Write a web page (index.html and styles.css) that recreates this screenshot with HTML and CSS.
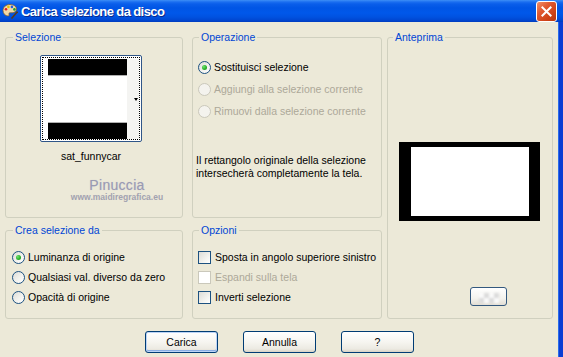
FILE: index.html
```html
<!DOCTYPE html>
<html lang="it">
<head>
<meta charset="utf-8">
<title>Carica selezione da disco</title>
<link rel="stylesheet" href="styles.css">
</head>
<body>
<div class="window">
  <div class="titlebar">
    <svg class="app-icon" viewBox="0 0 16 16" aria-hidden="true">
      <path d="M8 1.5C4 1.5 1 4 1 7.5c0 3 2.3 5.5 5 5.5 1.2 0 1.3-.9 1-1.6-.4-.9.2-1.6 1.2-1.6h2c2.3 0 4.3-1.6 4.3-3.8C14.5 3.3 11.6 1.5 8 1.5z" fill="#F2D9A6" stroke="#7A5A30" stroke-width=".8"/>
      <circle cx="4" cy="6.2" r="1.3" fill="#E02020"/>
      <circle cx="6.4" cy="3.9" r="1.3" fill="#F0C000"/>
      <circle cx="9.9" cy="3.9" r="1.3" fill="#2060E0"/>
      <circle cx="12.4" cy="6.4" r="1.3" fill="#20A030"/>
      <path d="M9.5 15.5 L15.5 8.5" stroke="#5A3A1A" stroke-width="1.6"/>
    </svg>
    <span class="title">Carica selezione da disco</span>
    <button class="close" aria-label="Chiudi">
      <svg viewBox="0 0 21 21" aria-hidden="true"><path d="M6 6 L15 15 M15 6 L6 15" stroke="#fff" stroke-width="2.2" stroke-linecap="square"/></svg>
    </button>
  </div>

  <div class="client">
    <div class="groups">
      <fieldset class="group g-sel">
        <legend>Selezione</legend>
        <div class="sel-body">
          <div class="thumb-col">
            <div class="thumb">
              <div class="thumb-focus">
                <div class="thumb-img"><div class="bar"></div><div class="bar"></div></div>
                <div class="thumb-strip"><span class="arrow"></span></div>
              </div>
            </div>
            <div class="thumb-name">sat_funnycar</div>
          </div>
          <div class="watermark">
            <div class="wm-name">Pinuccia</div>
            <div class="wm-url">www.maidiregrafica.eu</div>
          </div>
        </div>
      </fieldset>

      <fieldset class="group g-op">
        <legend>Operazione</legend>
        <div class="op-body">
          <div class="opt"><span class="radio checked"></span>Sostituisci selezione</div>
          <div class="opt disabled"><span class="radio"></span>Aggiungi alla selezione corrente</div>
          <div class="opt disabled"><span class="radio"></span>Rimuovi dalla selezione corrente</div>
        </div>
        <p class="note">Il rettangolo originale della selezione<br>intersecherà completamente la tela.</p>
      </fieldset>

      <fieldset class="group g-prev">
        <legend>Anteprima</legend>
        <div class="prev-body">
          <div class="preview"><div class="preview-inner"></div></div>
          <button class="mini-btn" aria-label="Trasparenza"><span class="checker"></span></button>
        </div>
      </fieldset>

      <fieldset class="group g-crea">
        <legend>Crea selezione da</legend>
        <div class="list-body">
          <div class="opt"><span class="radio checked"></span>Luminanza di origine</div>
          <div class="opt"><span class="radio"></span>Qualsiasi val. diverso da zero</div>
          <div class="opt"><span class="radio"></span>Opacità di origine</div>
        </div>
      </fieldset>

      <fieldset class="group g-opz">
        <legend>Opzioni</legend>
        <div class="list-body">
          <div class="opt"><span class="check"></span>Sposta in angolo superiore sinistro</div>
          <div class="opt disabled"><span class="check"></span>Espandi sulla tela</div>
          <div class="opt"><span class="check"></span>Inverti selezione</div>
        </div>
      </fieldset>
    </div>

    <div class="actions">
      <button class="btn default">Carica</button>
      <button class="btn">Annulla</button>
      <button class="btn">?</button>
    </div>
  </div>
</div>
</body>
</html>
```

FILE: styles.css
```css
* { box-sizing: border-box; }

html, body {
  margin: 0;
  padding: 0;
}

body {
  width: 563px;
  height: 357px;
  overflow: hidden;
  background: #ECE9D8;
  font-family: "Liberation Sans", Arial, sans-serif;
  font-size: 10.5px;
  color: #000;
}

.window {
  width: 563px;
  height: 357px;
  display: flex;
  flex-direction: column;
}

/* ---------- title bar ---------- */
.titlebar {
  height: 22px;
  flex: none;
  display: flex;
  align-items: center;
  padding: 0 6px 0 2px;
  background: linear-gradient(to bottom,
    #3D8FF6 0px, #1A6EF0 2px, #0A5EEA 4px, #0055E5 8px,
    #0058EA 13px, #0052E0 17px, #0047D2 20px, #003CBF 22px);
}

.app-icon {
  width: 16px;
  height: 16px;
  flex: none;
}

.title {
  flex: 1;
  margin-left: 3px;
  color: #fff;
  font-weight: bold;
  font-size: 13px;
  letter-spacing: -0.6px;
  text-shadow: 1px 1px 0 #0A2A8C;
  white-space: nowrap;
}

.close {
  width: 21px;
  height: 21px;
  padding: 0;
  margin-top: 1px;
  border: 1px solid #fff;
  border-radius: 3px;
  background: linear-gradient(135deg, #F0906A 0%, #E05A32 35%, #D04418 70%, #B8360E 100%);
  display: flex;
  align-items: center;
  justify-content: center;
}

.close svg {
  width: 19px;
  height: 19px;
}

/* ---------- client area ---------- */
.client {
  flex: 1;
  display: flex;
  flex-direction: column;
  padding: 9px 0 0 5px;
  border-right: 4px solid #0A3DD3;
  box-shadow: inset -1px 0 0 #2A6CEB;
}

.groups {
  display: grid;
  grid-template-columns: 178px 9px 190px 5px 166px;
  grid-template-rows: 187px 95px;
  row-gap: 6px;
  grid-template-areas:
    "sel . op . prev"
    "crea . opz . prev";
}

.g-sel { grid-area: sel; }
.g-op { grid-area: op; }
.g-prev { grid-area: prev; }
.g-crea { grid-area: crea; }
.g-opz { grid-area: opz; }

.group {
  margin: 0;
  padding: 0;
  min-width: 0;
  border: 1px solid #D0D0BF;
  border-radius: 3px;
}

.group legend {
  padding: 0 2px;
  margin-left: 7px;
  color: #0046D5;
  line-height: 13px;
}

.g-op legend, .g-opz legend { margin-left: 6px; }
.g-prev legend { margin-left: 5px; }

/* ---------- Selezione ---------- */
.sel-body {
  padding: 11px 0 0 34px;
}

.thumb-col {
  width: 102px;
  display: flex;
  flex-direction: column;
  align-items: center;
}

.thumb {
  width: 102px;
  height: 87px;
  padding: 1px;
  border: 1px solid #2F5587;
  border-radius: 2px;
  background: #fff;
}

.thumb-focus {
  height: 100%;
  border: 1px dotted #000;
  background: #fff;
  display: flex;
  padding: 1px 0 0 5px;
}

.thumb-img {
  width: 79px;
  display: flex;
  flex-direction: column;
  justify-content: space-between;
}

.bar {
  height: 16px;
  background: #000;
}

.bar:first-child { box-shadow: 0 1px 0 #B0B0B0; }
.bar:last-child { box-shadow: 0 -1px 0 #B0B0B0; }

.thumb-strip {
  flex: 1;
  background: #F4F4F2;
  display: flex;
  align-items: center;
  justify-content: flex-end;
  padding-right: 1px;
}

.arrow {
  width: 0;
  height: 0;
  border-left: 2.5px solid transparent;
  border-right: 2.5px solid transparent;
  border-top: 3px solid #000;
}

.thumb-name {
  margin-top: 8px;
  line-height: 13px;
  text-align: center;
}

.watermark {
  width: 120px;
  margin: 14px 0 0 17px;
  text-align: center;
  font-weight: bold;
}

.wm-name {
  font-size: 14px;
  line-height: 16px;
  color: #9A9AB2;
  font-weight: normal;
  letter-spacing: 0.3px;
  text-shadow: 0 0 1px #C4C4D4;
}

.wm-url {
  font-size: 8.5px;
  line-height: 9px;
  color: #A2A2B0;
}

/* ---------- options ---------- */
.opt {
  display: flex;
  align-items: center;
  height: 14px;
  white-space: nowrap;
}

.opt.disabled { color: #ACA899; }

.radio {
  width: 13px;
  height: 13px;
  flex: none;
  margin-right: 3px;
  border: 1px solid #1C5180;
  border-radius: 50%;
  background: linear-gradient(135deg, #DCDCD7 0%, #F2F2EE 55%, #FFFFFF 100%);
  display: flex;
  align-items: center;
  justify-content: center;
}

.radio.checked::after {
  content: "";
  width: 5px;
  height: 5px;
  border-radius: 50%;
  background: radial-gradient(circle at 35% 35%, #6FE36F 0%, #2BB22B 55%, #1A8E1A 100%);
}

.opt.disabled .radio {
  border-color: #CAC8BB;
  background: #F4F3EE;
}

.check {
  width: 13px;
  height: 13px;
  flex: none;
  margin-right: 4px;
  border: 1px solid #1C5180;
  background: linear-gradient(135deg, #DCDCD7 0%, #F0F0EC 55%, #FFFFFF 100%);
}

.opt.disabled .check {
  border-color: #CAC8BB;
  background: #fff;
}

/* ---------- Operazione ---------- */
.op-body {
  padding: 16px 0 0 5px;
  display: flex;
  flex-direction: column;
  gap: 8px;
}

.note {
  margin: 36px 0 0 3px;
  line-height: 13px;
}

/* ---------- Anteprima ---------- */
.prev-body {
  padding: 98px 0 0 11px;
}

.preview {
  width: 141px;
  height: 79px;
  background: #000;
  padding: 5px 11px 5px 12px;
}

.preview-inner {
  width: 100%;
  height: 100%;
  background: #fff;
}

.mini-btn {
  display: flex;
  align-items: flex-end;
  justify-content: center;
  width: 37px;
  height: 19px;
  margin: 66px 0 0 71px;
  padding: 0 0 2px;
  border: 1px solid #33587E;
  border-radius: 3px;
  background: linear-gradient(to bottom, #FFFFFF 0%, #F4F3EE 60%, #E2DED4 100%);
}

.checker {
  width: 20px;
  height: 10px;
  background:
    conic-gradient(#DCDCDC 25%, #FAFAFA 0 50%, #DCDCDC 0 75%, #FAFAFA 0) 0 0 / 10px 10px;
  filter: blur(1px);
}

/* ---------- lower groups ---------- */
.list-body {
  padding: 13px 0 0 6px;
  display: flex;
  flex-direction: column;
  gap: 6px;
}

.g-opz .list-body { padding-left: 5px; }

/* ---------- buttons ---------- */
.actions {
  display: flex;
  justify-content: center;
  gap: 25px;
  margin-top: 12px;
  padding-right: 5px;
}

.btn {
  width: 73px;
  height: 22px;
  padding: 0;
  border: 1px solid #003C74;
  border-radius: 3px;
  background: linear-gradient(to bottom, #FFFFFF 0%, #F6F5F0 50%, #ECEAE2 85%, #D8D2C4 100%);
  font-family: "Liberation Sans", Arial, sans-serif;
  font-size: 10.5px;
  color: #000;
}

.btn.default {
  box-shadow: inset 0 0 0 1px #BCD4F6, inset 0 -1px 0 1px #89ADE4;
}
```
